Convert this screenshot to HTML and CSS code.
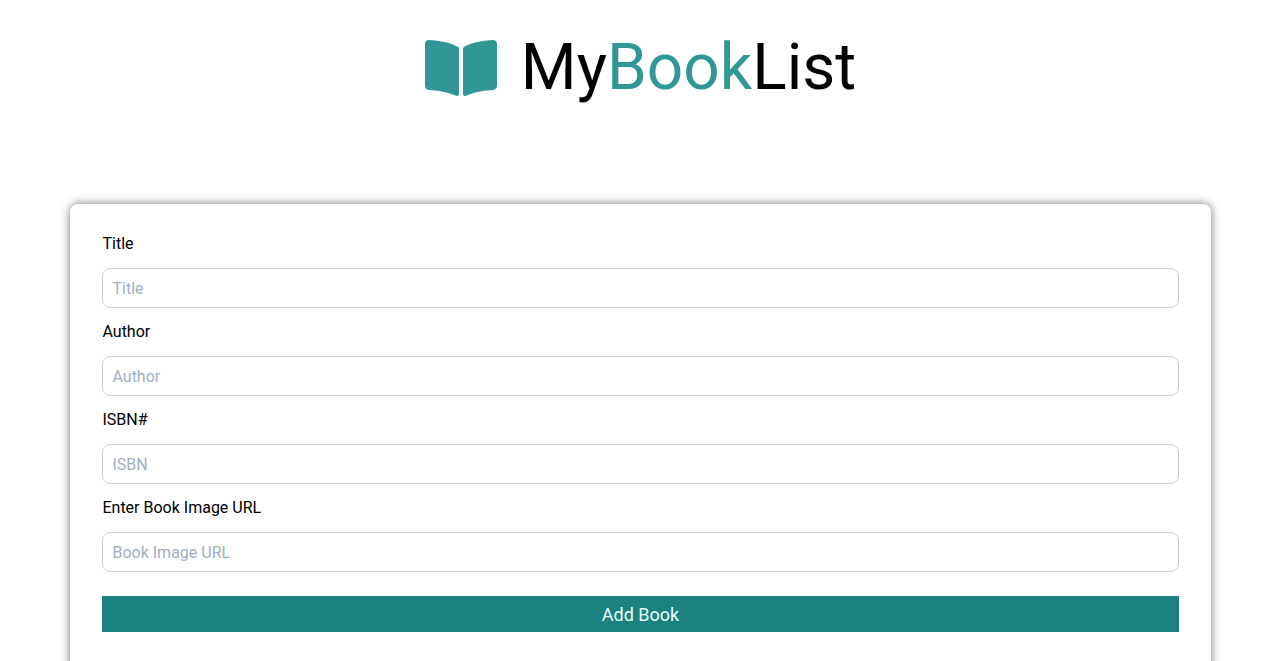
FILE: index.html
```html
<!DOCTYPE html>
<html lang="en">
<head>
  <meta charset="utf-8">
  <meta name="viewport" content="width=device-width, initial-scale=1">
  <title>MyBookList</title>
  <link rel="stylesheet" href="styles.css">
</head>
<body>
  <header class="site-header">
    <svg class="logo" viewBox="0 0 576 512" aria-hidden="true">
      <path fill="currentColor" d="M542.22 32.05c-54.8 3.11-163.72 14.43-230.96 55.59-4.64 2.84-7.27 7.89-7.27 13.17v363.87c0 11.55 12.63 18.85 23.28 13.49 69.18-34.82 169.23-44.32 218.7-46.92 16.89-.89 30.02-14.43 30.02-30.66V62.75c.01-17.71-15.35-31.74-33.77-30.7zM264.73 87.64C197.5 46.48 88.58 35.17 33.78 32.05 15.36 31.01 0 45.04 0 62.75V400.6c0 16.24 13.13 29.78 30.02 30.66 49.49 2.6 149.59 12.11 218.77 46.95 10.62 5.35 23.21-1.94 23.21-13.46V100.63c0-5.29-2.62-10.14-7.27-12.99z"/>
    </svg>
    <h1 class="site-title">My<span class="accent">Book</span>List</h1>
  </header>
  <main class="panel">
    <form class="book-form">
      <div class="field">
        <label class="label" for="title">Title</label>
        <input class="input" id="title" type="text" placeholder="Title">
      </div>
      <div class="field">
        <label class="label" for="author">Author</label>
        <input class="input" id="author" type="text" placeholder="Author">
      </div>
      <div class="field">
        <label class="label" for="isbn">ISBN#</label>
        <input class="input" id="isbn" type="text" placeholder="ISBN">
      </div>
      <div class="field">
        <label class="label" for="image">Enter Book Image URL</label>
        <input class="input" id="image" type="text" placeholder="Book Image URL">
      </div>
      <button class="submit" type="submit">Add Book</button>
    </form>
  </main>
</body>
</html>
```
FILE: styles.css
```css
*,
*::before,
*::after {
  box-sizing: border-box;
}

body {
  margin: 0;
  background: #fff;
  color: #000;
  font-family: Roboto, sans-serif;
  font-size: 16px;
  line-height: 24px;
}

.site-header {
  display: flex;
  align-items: center;
  justify-content: center;
  gap: 24px;
  padding: 28px 16px 96px;
}

.logo {
  width: 72px;
  height: 64px;
  color: #319795;
}

.site-title {
  margin: 0;
  font-size: 64px;
  font-weight: 400;
  line-height: 80px;
}

.accent {
  color: #319795;
}

.panel {
  width: 89%;
  margin: 0 auto;
  padding: 28px 32px 48px;
  border-radius: 8px;
  background: #fff;
  box-shadow: 0 0 10px #777;
}

.book-form,
.field {
  display: flex;
  flex-direction: column;
  gap: 12px;
}

.input {
  width: 100%;
  height: 40px;
  padding: 8px 9px;
  border: 1px solid #ccc;
  border-radius: 8px;
  background: #fff;
  color: #000;
  font: inherit;
}

.input::placeholder {
  color: #a0aec0;
  opacity: 1;
}

.submit {
  height: 36px;
  margin-top: 12px;
  padding: 0 16px;
  border: 0;
  background: #1a817e;
  color: #e6fffa;
  font-family: inherit;
  font-size: 18px;
  cursor: pointer;
}
```
